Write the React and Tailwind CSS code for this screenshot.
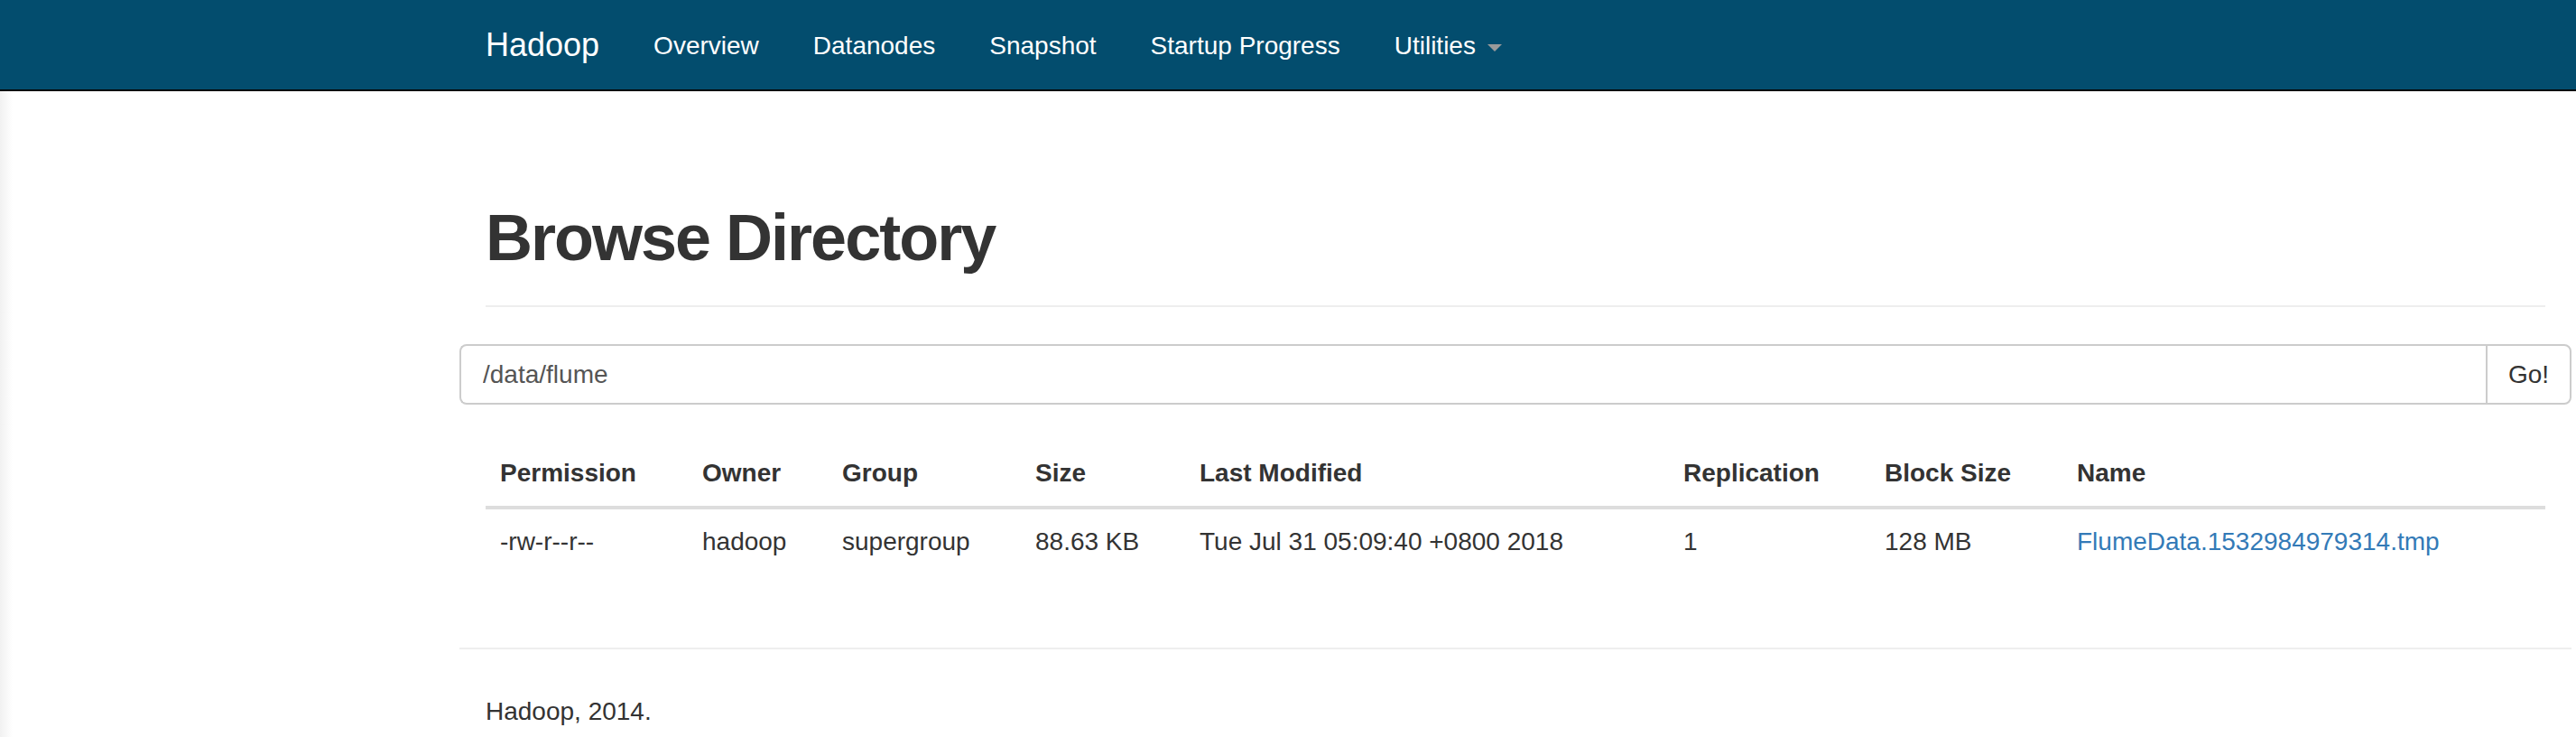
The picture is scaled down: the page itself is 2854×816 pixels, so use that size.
import React from 'react';

const navLinks = ['Overview', 'Datanodes', 'Snapshot', 'Startup Progress'];

const columns = [
  { label: 'Permission', className: 'w-[224px]' },
  { label: 'Owner', className: 'w-[155px]' },
  { label: 'Group', className: 'w-[214px]' },
  { label: 'Size', className: 'w-[182px]' },
  { label: 'Last Modified', className: 'w-[536px]' },
  { label: 'Replication', className: 'w-[223px]' },
  { label: 'Block Size', className: 'w-[213px]' },
  { label: 'Name', className: '' }
];

const files = [
  {
    permission: '-rw-r--r--',
    owner: 'hadoop',
    group: 'supergroup',
    size: '88.63 KB',
    modified: 'Tue Jul 31 05:09:40 +0800 2018',
    replication: '1',
    blockSize: '128 MB',
    name: 'FlumeData.1532984979314.tmp'
  }
];

const App = () => {
  return (
    <div className="min-h-[816px] bg-[linear-gradient(to_right,#f1f1f1,#ffffff_14px)] font-['Liberation_Sans',Arial,sans-serif] text-[#333]">
      {/* top navbar */}
      <nav className="h-[101px] bg-[#034d6e] border-b-2 border-[#050505]">
        <div className="ml-[508px] flex items-start">
          <a href="#" className="px-[30px] pt-[30px] text-[36px] leading-[40px] text-white">
            Hadoop
          </a>
          <ul className="flex">
            {navLinks.map((link) => (
              <li key={link}>
                <a href="#" className="block px-[30px] pt-[31px] text-[28px] leading-[40px] text-white">
                  {link}
                </a>
              </li>
            ))}
            <li>
              <a href="#" className="flex items-center px-[30px] pt-[31px] text-[28px] leading-[40px] text-white">
                Utilities
                <span className="ml-[13px] mt-[3px] h-0 w-0 border-x-[8px] border-t-[8px] border-x-transparent border-t-[#9a9a9a]" />
              </a>
            </li>
          </ul>
        </div>
      </nav>

      <div className="ml-[509px] w-[2340px]">
        <div className="px-[29px]">
          <div className="pt-[123px] pb-[35px] border-b-2 border-[#eee]">
            <h1 className="text-[72px] leading-[79px] font-bold tracking-[-2px] text-[#333]">Browse Directory</h1>
          </div>
        </div>

        {/* path input */}
        <div className="mt-[41px] flex h-[67px]">
          <input
            readOnly
            value="/data/flume"
            className="flex-1 h-full border-2 border-r-0 border-[#ccc] rounded-l-[8px] px-[24px] text-[28px] text-[#555] bg-white outline-none"
          />
          <button className="w-[95px] h-full border-2 border-[#ccc] rounded-r-[8px] bg-white text-[28px] text-[#333]">
            Go!
          </button>
        </div>

        <div className="px-[29px] mt-[40px]">
          <table className="w-full table-fixed border-collapse text-left text-[28px] leading-[40px]">
            <colgroup>
              {columns.map((col) => (
                <col key={col.label} className={col.className} />
              ))}
            </colgroup>
            <thead>
              <tr>
                {columns.map((col) => (
                  <th key={col.label} className="p-[16px] font-bold text-[#333] border-b-4 border-[#ddd]">
                    {col.label}
                  </th>
                ))}
              </tr>
            </thead>
            <tbody>
              {files.map((file) => (
                <tr key={file.name}>
                  <td className="p-[16px]">{file.permission}</td>
                  <td className="p-[16px]">{file.owner}</td>
                  <td className="p-[16px]">{file.group}</td>
                  <td className="p-[16px]">{file.size}</td>
                  <td className="p-[16px]">{file.modified}</td>
                  <td className="p-[16px]">{file.replication}</td>
                  <td className="p-[16px]">{file.blockSize}</td>
                  <td className="p-[16px]">
                    <a href="#" className="text-[#337ab7]">{file.name}</a>
                  </td>
                </tr>
              ))}
            </tbody>
          </table>
        </div>

        <div className="mt-[81px] h-[2px] bg-[#eee]" />

        <footer className="px-[29px] pt-[49px] text-[28px] leading-[40px] text-[#333]">
          Hadoop, 2014.
        </footer>
      </div>
    </div>
  );
};

export default App;
